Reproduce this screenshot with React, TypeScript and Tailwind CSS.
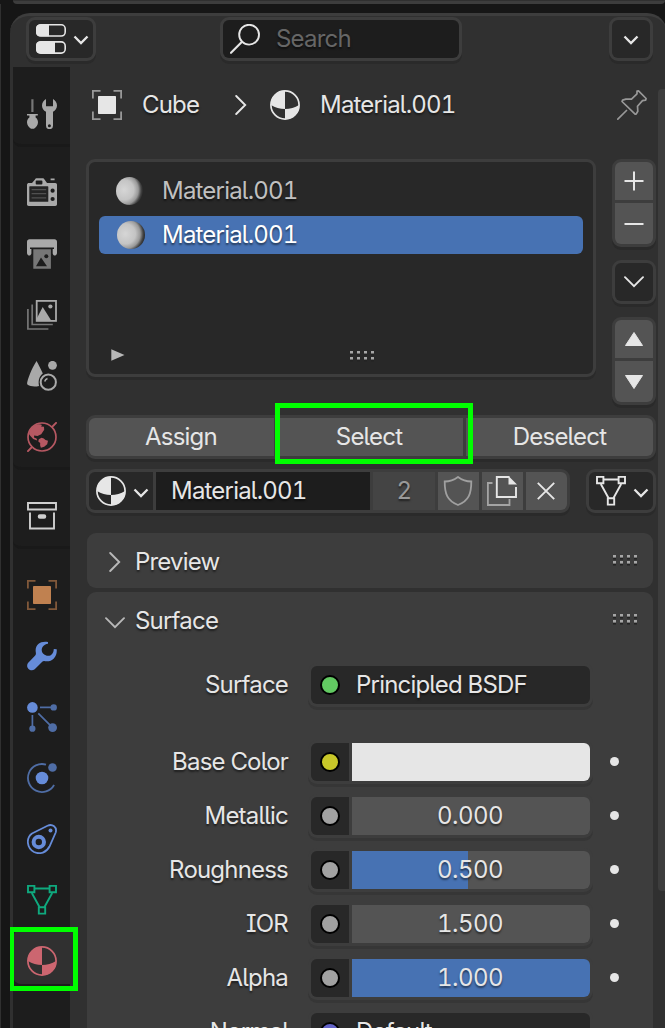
import type { ReactNode } from "react";

type IconProps = { children: ReactNode; className?: string };

function Icon({ children, className = "" }: IconProps) {
  return (
    <svg viewBox="0 0 30 30" width="30" height="30" fill="none" className={`block shrink-0 ${className}`}>
      {children}
    </svg>
  );
}

function ToolIcon() {
  return (
    <Icon className="text-[#a9a9a9]">
      <path d="M5.4 0.3V13" stroke="#777" strokeWidth="2.2" />
      <path d="M0 15h10.8v1.6H8.600v2C10 19.6 11 21.3 11 23.2c0 2.6-1.8 5.2-4 6.6H4C1.800 28.400 0 25.800 0 23.200c0-1.900 1-3.600 2.400-4.600v-2H0z" fill="currentColor" />
      <path d="M19 0v7.300h7V0c2.400 1.200 4 3.700 4 6.400 0 2.900-1.700 5.300-4 6.400V26.700a3.500 3.500 0 0 1-7 0V12.800c-2.400-1.100-4-3.500-4-6.400C15 3.700 16.600 1.200 19 0z" fill="currentColor" />
      <circle cx="22.400" cy="26.800" r="1.500" fill="#1d1d1d" />
    </Icon>
  );
}

function RenderIcon() {
  return (
    <Icon className="text-[#a9a9a9]">
      <path fillRule="evenodd" d="M2 5h3l3-3.500C8.500.5 9 .3 10 .3h5.500c1 0 1.500.5 2 1.300L20 5h8.300c1 0 1.700.8 1.700 1.700v19.500c0 1-.8 1.700-1.700 1.700H1.700C.8 27.900 0 27.100 0 26.200V6.700C0 5.700 1 5 2 5zM9.500 2.500c-.6 0-.8.3-.8.8v2.200c0 .6.300.9.800.9h5c.6 0 .9-.3.900-.9V3.300c0-.5-.3-.8-.9-.8z" fill="currentColor" />
      <rect x="2.300" y="8.300" width="19" height="15.500" rx=".6" fill="#242424" />
      <path d="M4.600 11.600h14.600M4.600 15.700h14.600M4.600 19.800h14.600" stroke="#505050" strokeWidth="1.300" />
      <circle cx="25.600" cy="12.700" r="2.100" fill="#1d1d1d" />
      <circle cx="25.600" cy="21" r="2.100" fill="#1d1d1d" />
      <path d="M23.600 1.300h4" stroke="currentColor" strokeWidth="1.800" />
    </Icon>
  );
}

function OutputIcon() {
  return (
    <Icon>
      <path d="M2.500.2h25C29 .2 30 1.200 30 2.700V14c0 1.500-1 2.500-2.300 2.500-1.200 0-2-1-2-2.200V9H4.400v5.300c0 1.200-.9 2.200-2.100 2.200C1 16.500 0 15.500 0 14V2.700C0 1.200 1 .2 2.500.2z" fill="#a9a9a9" />
      <path d="M3 9.300h24" stroke="#1d1d1d" strokeWidth="1.600" />
      <path fillRule="evenodd" d="M6.300 10.200h17.600v19.600H6.300zM9 27.300h11L14 18.600z" fill="#777" />
      <circle cx="19.300" cy="17.300" r="2" fill="#1d1d1d" />
    </Icon>
  );
}

function ViewLayerIcon() {
  return (
    <Icon>
      <path d="M.9 9v20h20.500M5.200 4.500v20h20.600" stroke="#777" strokeWidth="1.700" />
      <rect x="9.700" y=".9" width="19.300" height="20" stroke="#a9a9a9" strokeWidth="1.800" />
      <path d="M10 20.500V18l5.700-11 8.500 13.500z" fill="#a9a9a9" />
      <circle cx="23.400" cy="6.500" r="2.100" fill="#a9a9a9" />
    </Icon>
  );
}

function SceneIcon() {
  return (
    <Icon>
      <path d="M9.600 0C11 2.700 14.500 9 15.800 12.500 12.500 15 10.900 19 12 25 8 26 3 25.500.7 23.800 0 23 0 22 .3 21 2 14 6.500 4.500 9.600 0z" fill="#a9a9a9" />
      <circle cx="25.500" cy="4.300" r="4.400" fill="#a9a9a9" />
      <circle cx="21.300" cy="21.200" r="7.600" stroke="#a9a9a9" strokeWidth="2" />
      <path d="M17.700 20.500c.4-1.500 1.300-2.500 2.800-3" stroke="#a9a9a9" strokeWidth="1.500" />
    </Icon>
  );
}

function WorldIcon() {
  return (
    <Icon className="text-[#b65862]">
      <circle cx="15" cy="15" r="14" stroke="currentColor" strokeWidth="1.700" />
      <path d="M25 5l4.700-4.700M5 25l-4.700 4.700" stroke="currentColor" strokeWidth="1.900" />
      <path d="M2 12C2.500 7 6 3.500 10 2.500c2-.5 4-.5 5 .5l-1 1.500 3 .3.200 3-3 4.500-3.700 1.700-3.300-.4-.2 2 2.500.9.700 2-4-1.500L3 13.500z" fill="currentColor" />
      <path d="M11.800 17.200l2.700-1.500 2.300.8 1.700 1.500 2.500.7-.8 3.600-3 2.500-3.300 1-.8-2.500.1-2.300-1.900-1.500z" fill="currentColor" />
    </Icon>
  );
}

function CollectionIcon() {
  return (
    <Icon className="text-[#cfcfcf]">
      <path d="M1 2h28v6.500H1zM3 11.500v16h24v-16" stroke="currentColor" strokeWidth="1.900" />
      <rect x="10.800" y="13.300" width="8.400" height="4.400" rx="2" fill="currentColor" />
    </Icon>
  );
}

function ObjectIcon({ fill, line }: { fill: string; line: string }) {
  return (
    <Icon>
      <path d="M.9 8.500V.9h7.600M21.500.9h7.600v7.600M29.100 21.500v7.600h-7.600M8.500 29.100H.9v-7.600" stroke={line} strokeWidth="1.800" />
      <rect x="6" y="6" width="18" height="18" rx=".8" fill={fill} />
    </Icon>
  );
}

function ModifierIcon() {
  return (
    <Icon className="text-[#668cd9]">
      <path d="M21 1C13.500-.5 7.500 4 8.800 11.200c.2 1.200.3 2.300-.6 3.200L1 22c-3 4.500 2.500 9.500 6.700 6.300L15 21c.9-.9 1.700-1 3-.8 7 1 12.500-4.500 11.700-12L26.800 8c-.3 5-3 7.500-7 6.700-4.500-1-6.300-5-4.300-8.700C16.800 3.800 19 3 21 2.700z" fill="currentColor" />
    </Icon>
  );
}

function ParticlesIcon() {
  return (
    <Icon>
      <path d="M13 5.400h12M5.400 13v12M11.300 11.300l13 13" stroke="#4f6da5" strokeWidth="1.700" />
      <circle cx="5.400" cy="5.400" r="5.300" fill="#668cd9" />
      <circle cx="26.700" cy="5.400" r="3.200" fill="#4f6da5" />
      <circle cx="5.400" cy="26.700" r="3.100" fill="#4f6da5" />
      <circle cx="25.600" cy="25.600" r="4.400" fill="#4f6da5" />
    </Icon>
  );
}

function PhysicsIcon() {
  return (
    <Icon>
      <path d="M19 1.600A14 14 0 1 0 27.100 22" stroke="#4f6da5" strokeWidth="1.800" />
      <circle cx="15" cy="15" r="6.300" fill="#668cd9" />
      <circle cx="25.500" cy="4.500" r="4.300" fill="#4f6da5" />
    </Icon>
  );
}

function ConstraintIcon() {
  return (
    <Icon className="text-[#668cd9]">
      <path d="M5 9.500L20.500 1.700c5-2.200 9.800 1.500 8.200 6.800L22.500 22.500C19.500 28.500 13 30.800 7 28 0 24-1.500 14.500 5 9.500z" stroke="currentColor" strokeWidth="1.800" />
      <circle cx="11.800" cy="18" r="5.200" stroke="currentColor" strokeWidth="4" />
      <circle cx="23.500" cy="6.400" r="2" fill="currentColor" />
    </Icon>
  );
}

function MeshDataIcon({ className }: { className: string }) {
  return (
    <Icon className={className}>
      <path d="M8 3.500h14M4.800 8l7.700 14M25.200 8l-7.700 14" stroke="currentColor" strokeWidth="1.900" />
      <path d="M1 .9h6.400v6.400H1zM22.600.9H29v6.400h-6.400zM11.800 22.200h6.400v6.400h-6.400z" stroke="currentColor" strokeWidth="1.900" />
    </Icon>
  );
}

function MaterialIcon({ className }: { className: string }) {
  return (
    <Icon className={className}>
      <circle cx="15" cy="15" r="14.100" stroke="currentColor" strokeWidth="1.700" />
      <path d="M15 1v18c-5 0-10-1.500-14-4C.500 7 7 .500 15 1z" fill="currentColor" />
      <path d="M15 19c5 0 10-1.500 14-4 .5 8-6 14.500-14 14z" fill="currentColor" />
    </Icon>
  );
}

function PinIcon() {
  return (
    <Icon className="text-[#989898]">
      <path d="M.8 29.200l8.700-8.700M20 1.200l1.500-.3 7.600 7.600-.4 1.600-3.200.5-5 5.600.3 5-1.700 2.900h-1L5 11.500l.6-1.400 3.300-1h5.600L20 3.800z" stroke="currentColor" strokeWidth="1.700" strokeLinejoin="round" strokeLinecap="round" />
    </Icon>
  );
}

function EditorIcon() {
  return (
    <Icon className="text-[#e6e6e6]">
      <rect x=".8" y=".8" width="28.400" height="11.200" rx="4" stroke="currentColor" strokeWidth="1.600" />
      <path d="M4 .5h9v11.800H4a4 4 0 0 1-4-4V4.500a4 4 0 0 1 4-4z" fill="currentColor" />
      <rect x=".8" y="17.900" width="28.400" height="11.200" rx="4" stroke="currentColor" strokeWidth="1.600" />
      <path d="M4 17.600h15v11.800H4a4 4 0 0 1-4-4v-3.800a4 4 0 0 1 4-4z" fill="currentColor" />
    </Icon>
  );
}

function SearchIcon() {
  return (
    <Icon className="text-[#e6e6e6]">
      <circle cx="19.100" cy="10.700" r="9.900" stroke="currentColor" strokeWidth="1.900" />
      <path d="M12 17.800L1 28.800" stroke="currentColor" strokeWidth="2.100" strokeLinecap="round" />
    </Icon>
  );
}

function ShieldIcon() {
  return (
    <Icon className="text-[#a0a0a0]">
      <path d="M15 1C11 4 6.500 5.500 1.700 5.500c0 12 2.300 19 13.300 23.500 11-4.500 13.300-11.500 13.300-23.500C23.500 5.500 19 4 15 1z" stroke="currentColor" strokeWidth="1.800" />
    </Icon>
  );
}

function DuplicateIcon() {
  return (
    <Icon>
      <path d="M5.500 7H.9v22h21.600v-6" stroke="#a4a4a4" strokeWidth="1.800" />
      <path d="M22.500 1H9.800v20H29V11" stroke="#e6e6e6" strokeWidth="1.900" />
      <path d="M21.500 0l8.500 8.500h-8.500z" fill="#e6e6e6" />
    </Icon>
  );
}

function Chevron({ className = "" }: { className?: string }) {
  return (
    <svg viewBox="0 0 16 10" width="16" height="10" fill="none" className={`block shrink-0 ${className}`}>
      <path d="M1.500 1.500L8 8l6.500-6.500" stroke="#e6e6e6" strokeWidth="2.300" />
    </svg>
  );
}

function WideChevron({ className = "", color = "#e6e6e6" }: { className?: string; color?: string }) {
  return (
    <svg viewBox="0 0 20 12" width="20" height="12" fill="none" className={`block shrink-0 ${className}`}>
      <path d="M1 1.200l9 9 9-9" stroke={color} strokeWidth="1.900" strokeLinecap="round" />
    </svg>
  );
}

function RightChevron({ color = "#e6e6e6", className = "" }: { color?: string; className?: string }) {
  return (
    <svg viewBox="0 0 12 20" width="12" height="20" fill="none" className={`block shrink-0 ${className}`}>
      <path d="M1.200 1l9 9-9 9" stroke={color} strokeWidth="1.900" strokeLinecap="round" />
    </svg>
  );
}

function Grip({ className = "" }: { className?: string }) {
  return (
    <svg viewBox="0 0 24 11" width="24" height="11" className={`block shrink-0 ${className}`}>
      {[0, 7, 14, 21].map((x) => (
        <g key={x}>
          <path d={`M${x} 3h3v1.500h-3zM${x} 9h3v1.500h-3z`} fill="#232323" />
          <path d={`M${x} 0h3v2.500h-3zM${x} 6h3v2.500h-3z`} fill="#a6a6a6" />
        </g>
      ))}
    </svg>
  );
}

function Ball({ id, clipped }: { id: string; clipped?: boolean }) {
  return (
    <svg viewBox="0 0 28 28" width="28" height="28" className="block shrink-0">
      <defs>
        <radialGradient id={id} cx=".3" cy=".46" r=".72">
          <stop offset="0" stopColor="#d6d6d6" />
          <stop offset=".5" stopColor="#c4c4c4" />
          <stop offset=".73" stopColor="#999" />
          <stop offset=".88" stopColor="#444" />
          <stop offset="1" stopColor="#222" />
        </radialGradient>
      </defs>
      <ellipse cx={clipped ? 13.500 : 14} cy="14" rx={clipped ? 13.500 : 14} ry="14" fill={`url(#${id})`} />
    </svg>
  );
}

function Socket({ color }: { color: string }) {
  return <span className="block size-5 shrink-0 rounded-full border-2 border-black" style={{ backgroundColor: color }} />;
}

const frame = "flex shrink-0 border-3 border-[#3d3d3d] bg-[#3d3d3d] rounded-[9px] shadow-[0_3px_0_#2a2a2a]";

function Sidebar() {
  return (
    <nav className="flex w-[57px] shrink-0 flex-col bg-[#1d1d1d]">
      <div className="flex h-20 flex-col items-center rounded-bl-lg border-b-3 border-[#191919] pt-8"><ToolIcon /></div>
      <div className="flex h-[323px] flex-col items-center gap-[31px] rounded-bl-lg border-b-3 border-[#191919] pt-[31px]">
        <RenderIcon /><OutputIcon /><ViewLayerIcon /><SceneIcon /><WorldIcon />
      </div>
      <div className="flex h-[79px] flex-col items-center rounded-bl-lg border-b-3 border-[#191919] pt-[31px]"><CollectionIcon /></div>
      <div className="flex flex-col items-center gap-[31px] pt-[31px]">
        <ObjectIcon fill="#c08150" line="#80583a" />
        <ModifierIcon /><ParticlesIcon /><PhysicsIcon /><ConstraintIcon />
        <MeshDataIcon className="text-[#0fa97e]" />
        <div className="relative -mt-4 flex h-[54px] w-[57px] items-center justify-center rounded-l-lg bg-[#303030] pt-2">
          <MaterialIcon className="text-[#cc6670]" />
          <div className="absolute -left-1 -top-[3px] h-16 w-[69px] border-5 border-[#00ff00]" />
        </div>
      </div>
    </nav>
  );
}

function Header() {
  return (
    <header className="flex h-[51px] shrink-0 pl-4 pt-px">
      <button className={`${frame} h-11 w-[70px]`}>
        <span className="flex flex-1 items-center gap-[7px] rounded-md bg-[#282828] pl-[7px]"><EditorIcon /><Chevron className="mt-0.5" /></span>
      </button>
      <label className={`${frame} ml-[124px] h-11 w-[242px]`}>
        <span className="flex flex-1 items-center gap-4 rounded-md bg-[#1d1d1d] pl-[7px] text-[#666]"><SearchIcon />Search</span>
      </label>
      <button className={`${frame} ml-[147px] h-11 w-11`}>
        <span className="flex flex-1 items-center justify-center rounded-md bg-[#282828]"><Chevron className="mt-0.5" /></span>
      </button>
    </header>
  );
}

function MaterialSlots() {
  return (
    <section className="mt-[39px] flex gap-4">
      <div className="flex h-[218px] w-[510px] flex-col rounded-[9px] border-3 border-[#3d3d3d] bg-[#282828] px-[10px] pt-[10px] shadow-[0_3px_0_#2a2a2a]">
        <div className="flex h-[38px] items-center gap-[18px] pl-[17px] text-[#c0c0c0]"><Ball id="shade-a" clipped />Material.001</div>
        <div className="mt-1.5 flex h-[38px] items-center gap-[17px] rounded-md bg-[#4772b3] pl-[18px] text-white"><Ball id="shade-b" />Material.001</div>
        <div className="mt-[95px] flex pl-3">
          <svg viewBox="0 0 14 12" width="14" height="12"><path d="M.3.3L13.500 6 .3 11.700z" fill="#b8b8b8" /></svg>
          <Grip className="ml-[225px] mt-[2px]" />
        </div>
      </div>
      <div className="flex flex-col">
        <div className={`${frame} h-[88px] w-11 flex-col gap-[3px]`}>
          <button className="flex h-[38px] items-center justify-center rounded-t-md bg-[#545454]">
            <svg viewBox="0 0 20 20" width="20" height="20"><path d="M10 .5v19M.5 10h19" stroke="#e6e6e6" strokeWidth="2" /></svg>
          </button>
          <button className="flex h-[41px] items-center justify-center rounded-b-md bg-[#545454]">
            <svg viewBox="0 0 20 20" width="20" height="20"><path d="M.5 10h19" stroke="#e6e6e6" strokeWidth="2" /></svg>
          </button>
        </div>
        <button className={`${frame} mt-[13px] h-11 w-11`}>
          <span className="flex flex-1 items-center justify-center rounded-md bg-[#282828]"><WideChevron /></span>
        </button>
        <div className={`${frame} mt-[13px] h-[88px] w-11 flex-col gap-[3px]`}>
          <button className="flex h-[38px] items-center justify-center rounded-t-md bg-[#545454]">
            <svg viewBox="0 0 18 14" width="18" height="14"><path d="M9 .5L17.500 13.500H.5z" fill="#e6e6e6" stroke="#e6e6e6" strokeLinejoin="round" /></svg>
          </button>
          <button className="flex h-[41px] items-center justify-center rounded-b-md bg-[#545454]">
            <svg viewBox="0 0 18 14" width="18" height="14"><path d="M9 13.500L.5.5h17z" fill="#e6e6e6" stroke="#e6e6e6" strokeLinejoin="round" /></svg>
          </button>
        </div>
      </div>
    </section>
  );
}

function AssignRow() {
  return (
    <div className={`${frame} relative mt-[10px] h-11 w-[570px] gap-[3px]`}>
      <button className="w-[185px] rounded-l-md bg-[#545454] pr-px">Assign</button>
      <button className="w-[186px] bg-[#545454] pr-0.5">Select</button>
      <button className="w-[187px] rounded-r-md bg-[#545454]">Deselect</button>
      <div className="absolute -top-[15px] left-[186px] h-[61px] w-[198px] border-5 border-[#00ff00]" />
    </div>
  );
}

function DatablockRow() {
  return (
    <div className="mt-[10px] flex">
      <div className={`${frame} h-11 w-[484px] gap-[3px]`}>
        <button className="flex w-16 items-center gap-[7px] rounded-l-md bg-[#282828] pl-[7px]">
          <MaterialIcon className="text-[#e6e6e6]" /><Chevron className="mt-[3px]" />
        </button>
        <div className="flex w-[214px] items-center bg-[#1d1d1d] pl-[15px]">Material.001</div>
        <div className="flex w-[62px] items-center justify-center bg-[#444] text-[#999]">2</div>
        <button className="flex w-[41px] items-center bg-[#545454] pl-[5px]"><ShieldIcon /></button>
        <button className="flex w-[41px] items-center bg-[#545454] pl-[5px]"><DuplicateIcon /></button>
        <button className="flex w-[41px] items-center rounded-r-md bg-[#545454] pl-[11px]">
          <svg viewBox="0 0 18 18" width="18" height="18"><path d="M.8.8l16.400 16.400M17.200.8L.8 17.200" stroke="#e6e6e6" strokeWidth="1.900" /></svg>
        </button>
      </div>
      <button className={`${frame} ml-4 h-11 w-[70px]`}>
        <span className="flex flex-1 items-center gap-[7px] rounded-md bg-[#282828] pl-[7px]">
          <MeshDataIcon className="text-[#e6e6e6]" /><Chevron className="mt-[3px]" />
        </span>
      </button>
    </div>
  );
}

const fieldShadow = "rounded-md shadow-[0_0_0_3px_#3d3d3d,0_3px_0_3px_#363636]";

type Prop = { label: string; socket: string; value?: string; fill?: number; swatch?: boolean };

const props: Prop[] = [
  { label: "Base Color", socket: "#c8c729", swatch: true },
  { label: "Metallic", socket: "#a1a1a1", value: "0.000", fill: 0 },
  { label: "Roughness", socket: "#a1a1a1", value: "0.500", fill: 116 },
  { label: "IOR", socket: "#a1a1a1", value: "1.500", fill: 0 },
  { label: "Alpha", socket: "#a1a1a1", value: "1.000", fill: 238 },
];

function PropRow({ p }: { p: Prop }) {
  return (
    <div className="flex h-[38px] items-center">
      <div className="w-[201px] text-right">{p.label}</div>
      <div className={`ml-[23px] flex h-[38px] w-[279px] gap-[3px] ${fieldShadow}`}>
        <div className="flex w-[38px] items-center justify-center rounded-l-md bg-[#282828]"><Socket color={p.socket} /></div>
        {p.swatch ? (
          <div className="w-[238px] rounded-r-md bg-[#e6e6e6]" />
        ) : (
          <div className="grid w-[238px] overflow-hidden rounded-r-md bg-[#545454]">
            <div className="col-start-1 row-start-1 bg-[#4772b3]" style={{ width: p.fill }} />
            <div className="col-start-1 row-start-1 self-center pr-[2px] text-center tracking-[-0.5px]">{p.value}</div>
          </div>
        )}
      </div>
      <span className="-mt-px ml-5 block size-[9px] rounded-full bg-[#e6e6e6]" />
    </div>
  );
}

function SelectField({ label, socket, value }: { label: string; socket: string; value: string }) {
  return (
    <div className="flex h-[38px] shrink-0 items-center">
      <div className="w-[201px] text-right">{label}</div>
      <div className={`ml-[23px] flex h-[38px] w-[279px] items-center gap-4 bg-[#282828] pl-[9px] ${fieldShadow}`}>
        <Socket color={socket} />{value}
      </div>
    </div>
  );
}

export default function App() {
  return (
    <div className="flex h-[1028px] w-[665px] flex-col overflow-hidden bg-[#161616] font-['Inter',sans-serif] text-[24px] leading-[30px] tracking-[-0.8px] text-[#e6e6e6] [font-feature-settings:'tnum','cv05','cv08'] [text-shadow:0_2px_2px_rgba(0,0,0,0.5)]">
      <div className="ml-[13px] h-1 shrink-0 rounded-b-[20px] border-b-3 border-[#3d3d3d] bg-[#303030]" />
      <div className="flex h-[1024px] border-l border-[#303030] pl-[9px] pt-[9px]">
        <main className="flex w-[657px] shrink-0 flex-col overflow-hidden rounded-t-[20px] border-t-3 border-[#3d3d3d] bg-[#303030]">
          <Header />
          <div className="flex min-h-0 flex-1 pl-[3px]">
            <Sidebar />
            <div className="flex w-[588px] shrink-0 flex-col pl-4">
              <div className="mt-[23px] flex h-[30px] shrink-0 items-center pl-1.5">
                <ObjectIcon fill="#e6e6e6" line="#989898" />
                <span className="ml-5 w-[93px]">Cube</span>
                <RightChevron />
                <MaterialIcon className="ml-[23px] text-[#e6e6e6]" />
                <span className="ml-5 w-[297px]">Material.001</span>
                <PinIcon />
              </div>
              <MaterialSlots />
              <AssignRow />
              <DatablockRow />
              <section className="ml-px mt-5 flex h-[55px] w-[566px] shrink-0 items-center rounded-[9px] bg-[#3d3d3d] pl-[22px] pt-[3px]">
                <RightChevron color="#b8b8b8" /><span className="ml-[14px] w-[478px]">Preview</span><Grip className="-mt-1" />
              </section>
              <section className="ml-px mt-1 flex h-[470px] w-[566px] shrink-0 flex-col rounded-t-[9px] bg-[#3d3d3d]">
                <div className="flex h-[57px] shrink-0 items-center pl-[18px]">
                  <WideChevron color="#b8b8b8" className="mt-1" /><span className="ml-[10px] w-[478px]">Surface</span><Grip className="-mt-0.5" />
                </div>
                <div className="mt-[17px]"><SelectField label="Surface" socket="#62c962" value="Principled BSDF" /></div>
                <div className="mt-[39px] flex flex-col gap-4">
                  {props.map((p) => <PropRow key={p.label} p={p} />)}
                  <SelectField label="Normal" socket="#6363c7" value="Default" />
                </div>
              </section>
            </div>
            <div className="mt-[22px] h-[802px] w-[10px] shrink-0 rounded-[4px] bg-[#3d3d3d]" />
          </div>
        </main>
      </div>
    </div>
  );
}
